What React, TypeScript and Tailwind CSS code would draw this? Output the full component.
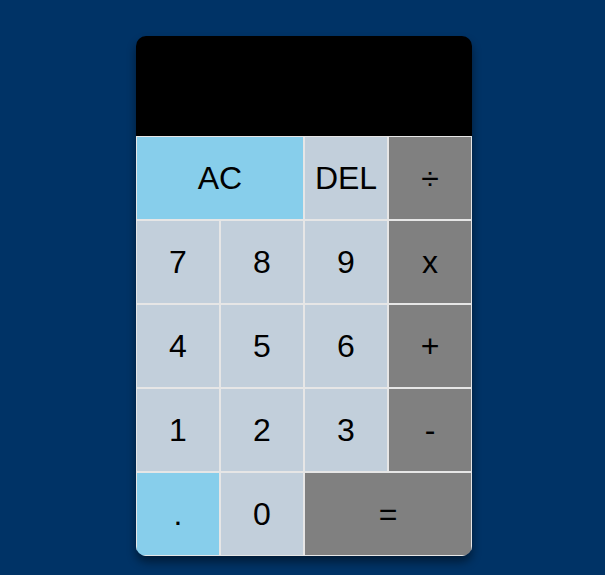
import React from 'react';

type Key = { label: string; tone: 'sky' | 'light' | 'gray'; span?: boolean };

const keys: Key[] = [
  { label: 'AC', tone: 'sky', span: true },
  { label: 'DEL', tone: 'light' },
  { label: '÷', tone: 'gray' },
  { label: '7', tone: 'light' },
  { label: '8', tone: 'light' },
  { label: '9', tone: 'light' },
  { label: 'x', tone: 'gray' },
  { label: '4', tone: 'light' },
  { label: '5', tone: 'light' },
  { label: '6', tone: 'light' },
  { label: '+', tone: 'gray' },
  { label: '1', tone: 'light' },
  { label: '2', tone: 'light' },
  { label: '3', tone: 'light' },
  { label: '-', tone: 'gray' },
  { label: '.', tone: 'sky' },
  { label: '0', tone: 'light' },
  { label: '=', tone: 'gray', span: true },
];

const toneClass = {
  sky: 'bg-[#87ceeb]',
  light: 'bg-[#c2cfdb]',
  gray: 'bg-[#808080]',
};

export default function App() {
  return (
    <div className="min-h-screen bg-[#003366] flex justify-center pt-9 pl-[3px]" style={{ fontFamily: '"Liberation Sans", Arial, sans-serif' }}>
      <div className="grid grid-cols-[repeat(4,84px)] grid-rows-[100px_repeat(5,84px)] h-fit rounded-[10px] overflow-hidden shadow-[0_6px_10px_rgba(0,0,0,0.45)]">
        {/* Display */}
        <div className="col-span-4 bg-black" />

        {keys.map((k) => (
          <button
            key={k.label}
            className={`${toneClass[k.tone]} ${k.span ? 'col-span-2' : ''} border border-[#e6e6e6] text-[2rem] text-black flex items-center justify-center cursor-pointer`}
          >
            {k.label}
          </button>
        ))}
      </div>
    </div>
  );
}
